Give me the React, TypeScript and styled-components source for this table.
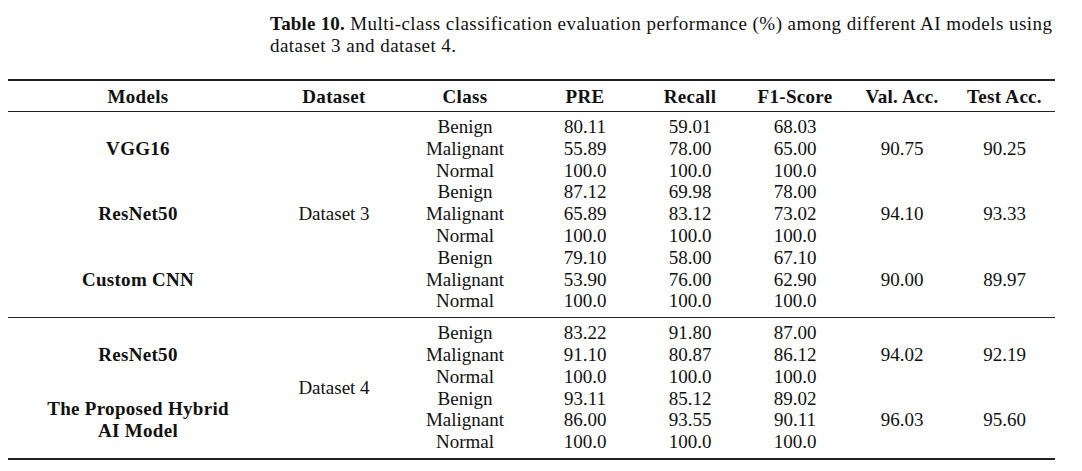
import React from "react";
import styled, { createGlobalStyle } from "styled-components";

const GlobalStyle = createGlobalStyle`
  html, body {
    margin: 0;
    padding: 0;
    background: #ffffff;
  }
  body {
    font-family: "Liberation Serif", "Times New Roman", serif;
    color: #111111;
  }
`;

const Page = styled.div`
  padding: 13px 27px 0 8px;
  width: 1047px;
`;

const Caption = styled.div`
  margin: 0 0 22px 262px;
  font-size: 19px;
  line-height: 22px;
  letter-spacing: 0.45px;
`;

const CaptionLine = styled.div`
  white-space: nowrap;
`;

const CaptionLabel = styled.b`
  font-weight: bold;
  letter-spacing: 0.2px;
`;

const COLUMNS = "260px 132px 130px 110px 100px 110px 104px 101px";
const LINE = 21.8;

const Table = styled.div`
  border-top: 2px solid #222;
  border-bottom: 2px solid #222;
  font-size: 19px;
`;

const HeaderRow = styled.div`
  display: grid;
  grid-template-columns: ${COLUMNS};
  height: 30px;
  align-items: center;
  border-bottom: 1px solid #222;
`;

const HeaderCell = styled.div`
  text-align: center;
  font-weight: bold;
  padding-top: 1px;
  letter-spacing: 0.3px;
`;

const Section = styled.div<{ $last?: boolean }>`
  display: grid;
  grid-template-columns: ${COLUMNS};
  grid-auto-rows: ${LINE}px;
  padding: 4px 0 5px;
  border-bottom: ${(p) => (p.$last ? "none" : "1px solid #222")};
`;

const Cell = styled.div<{ $col: number; $row: number; $span?: number; $bold?: boolean }>`
  grid-column: ${(p) => p.$col};
  grid-row: ${(p) => p.$row} / span ${(p) => p.$span ?? 1};
  display: flex;
  align-items: center;
  justify-content: center;
  text-align: center;
  line-height: ${LINE}px;
  font-weight: ${(p) => (p.$bold ? "bold" : "normal")};
  letter-spacing: ${(p) => (p.$bold ? "0.3px" : "0")};
  white-space: nowrap;
`;

const ModelName = styled.div`
  display: flex;
  flex-direction: column;
  align-items: center;
`;

type ModelGroup = {
  name: string[];
  rows: [string, string, string, string][];
  val: string;
  test: string;
};

type DatasetBlock = {
  label: string;
  models: ModelGroup[];
};

const headers = ["Models", "Dataset", "Class", "PRE", "Recall", "F1-Score", "Val. Acc.", "Test Acc."];

const data: DatasetBlock[] = [
  {
    label: "Dataset 3",
    models: [
      {
        name: ["VGG16"],
        rows: [
          ["Benign", "80.11", "59.01", "68.03"],
          ["Malignant", "55.89", "78.00", "65.00"],
          ["Normal", "100.0", "100.0", "100.0"],
        ],
        val: "90.75",
        test: "90.25",
      },
      {
        name: ["ResNet50"],
        rows: [
          ["Benign", "87.12", "69.98", "78.00"],
          ["Malignant", "65.89", "83.12", "73.02"],
          ["Normal", "100.0", "100.0", "100.0"],
        ],
        val: "94.10",
        test: "93.33",
      },
      {
        name: ["Custom CNN"],
        rows: [
          ["Benign", "79.10", "58.00", "67.10"],
          ["Malignant", "53.90", "76.00", "62.90"],
          ["Normal", "100.0", "100.0", "100.0"],
        ],
        val: "90.00",
        test: "89.97",
      },
    ],
  },
  {
    label: "Dataset 4",
    models: [
      {
        name: ["ResNet50"],
        rows: [
          ["Benign", "83.22", "91.80", "87.00"],
          ["Malignant", "91.10", "80.87", "86.12"],
          ["Normal", "100.0", "100.0", "100.0"],
        ],
        val: "94.02",
        test: "92.19",
      },
      {
        name: ["The Proposed Hybrid", "AI Model"],
        rows: [
          ["Benign", "93.11", "85.12", "89.02"],
          ["Malignant", "86.00", "93.55", "90.11"],
          ["Normal", "100.0", "100.0", "100.0"],
        ],
        val: "96.03",
        test: "95.60",
      },
    ],
  },
];

export default function App() {
  return (
    <>
      <GlobalStyle />
      <Page>
        <Caption>
          <CaptionLine>
            <CaptionLabel>Table 10.</CaptionLabel> Multi-class classification evaluation performance
            (%) among different AI models using
          </CaptionLine>
          <CaptionLine>dataset 3 and dataset 4.</CaptionLine>
        </Caption>
        <Table>
          <HeaderRow>
            {headers.map((h) => (
              <HeaderCell key={h}>{h}</HeaderCell>
            ))}
          </HeaderRow>
          {data.map((block, bi) => {
            const total = block.models.length * 3;
            return (
              <Section key={block.label} $last={bi === data.length - 1}>
                <Cell $col={2} $row={1} $span={total}>
                  {block.label}
                </Cell>
                {block.models.map((model, mi) => {
                  const start = mi * 3 + 1;
                  return (
                    <React.Fragment key={mi}>
                      <Cell $col={1} $row={start} $span={3} $bold>
                        <ModelName>
                          {model.name.map((n) => (
                            <span key={n}>{n}</span>
                          ))}
                        </ModelName>
                      </Cell>
                      {model.rows.map((row, ri) =>
                        row.map((value, ci) => (
                          <Cell key={`${ri}-${ci}`} $col={ci + 3} $row={start + ri}>
                            {value}
                          </Cell>
                        ))
                      )}
                      <Cell $col={7} $row={start} $span={3}>
                        {model.val}
                      </Cell>
                      <Cell $col={8} $row={start} $span={3}>
                        {model.test}
                      </Cell>
                    </React.Fragment>
                  );
                })}
              </Section>
            );
          })}
        </Table>
      </Page>
    </>
  );
}
